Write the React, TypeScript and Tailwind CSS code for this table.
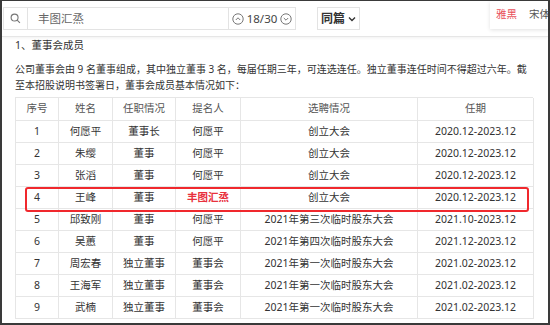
import React from "react";

const rows = [
  ["1", "何愿平", "董事长", "何愿平", "创立大会", "2020.12-2023.12"],
  ["2", "朱缨", "董事", "何愿平", "创立大会", "2020.12-2023.12"],
  ["3", "张滔", "董事", "何愿平", "创立大会", "2020.12-2023.12"],
  ["4", "王峰", "董事", "丰图汇烝", "创立大会", "2020.12-2023.12"],
  ["5", "邱致刚", "董事", "何愿平", "2021年第三次临时股东大会", "2021.10-2023.12"],
  ["6", "吴蕙", "董事", "何愿平", "2021年第四次临时股东大会", "2021.12-2023.12"],
  ["7", "周宏春", "独立董事", "董事会", "2021年第一次临时股东大会", "2021.02-2023.12"],
  ["8", "王海军", "独立董事", "董事会", "2021年第一次临时股东大会", "2021.02-2023.12"],
  ["9", "武楠", "独立董事", "董事会", "2021年第一次临时股东大会", "2021.02-2023.12"],
];

const widths = ["w-[43px]", "w-[54px]", "w-[63px]", "w-[65px]", "w-[177px]", "w-[116px]"];

export default function App() {
  return (
    <div
      className="w-[550px] h-[325px] overflow-hidden bg-white border-2 border-t border-[#3a3a3a] relative text-[#333]"
      style={{ fontFamily: '"Noto Sans", "Noto Sans CJK SC", sans-serif' }}
    >
      {/* toolbar */}
      <div className="h-[36px] flex items-start pt-[6px] border-b border-[#e6e6e6] shadow-[0_1px_3px_rgba(0,0,0,0.06)]">
        <div className="ml-[1px] w-[226px] h-[23px] border border-[#e3e3e3] flex items-center">
          <div className="w-[24px] h-full flex items-center justify-center border-r border-[#e3e3e3]">
            <svg width="11" height="11" viewBox="0 0 12 12" fill="none" stroke="#777" strokeWidth="1.2">
              <circle cx="5" cy="5" r="3.8" />
              <path d="M7.8 7.8L10.8 10.8" />
            </svg>
          </div>
          <span className="pl-[10px] text-[11.5px] text-[#666]">丰图汇烝</span>
        </div>
        <div className="w-[67px] h-[23px] border border-l-0 border-[#e3e3e3] flex items-center justify-center gap-[3px] text-[11.5px] text-[#444]">
          <svg width="12" height="12" viewBox="0 0 12 12" fill="none" stroke="#777" strokeWidth="1">
            <circle cx="6" cy="6" r="5.2" />
            <path d="M3.8 7L6 4.8L8.2 7" />
          </svg>
          <span>18/30</span>
          <svg width="12" height="12" viewBox="0 0 12 12" fill="none" stroke="#777" strokeWidth="1">
            <circle cx="6" cy="6" r="5.2" />
            <path d="M3.8 5L6 7.2L8.2 5" />
          </svg>
        </div>
        <div className="ml-[21px] w-[43px] h-[23px] border border-[#e3e3e3] flex items-center justify-center gap-[3px] text-[12px] font-bold text-[#333]">
          <span>同篇</span>
          <svg width="8" height="6" viewBox="0 0 8 6" fill="none" stroke="#333" strokeWidth="1.4">
            <path d="M1 1.5L4 4.5L7 1.5" />
          </svg>
        </div>
        <div className="ml-auto -mt-[6px] w-[58px] h-[28px] bg-white shadow-[0_1px_4px_rgba(0,0,0,0.12)] flex items-center pl-[6px] gap-[6px] text-[10.5px] whitespace-nowrap">
          <span className="text-[#e8505b]">雅黑</span>
          <span className="w-px h-[10px] bg-[#ddd]" />
          <span className="text-[#555]">宋体</span>
        </div>
      </div>

      <div className="pl-[13px]">
        <div className="text-[10.5px] leading-[16px] text-[#333]">1、董事会成员</div>
        <div className="mt-[8px] text-[10px] leading-[16px] text-[#333] whitespace-nowrap">
          <div>公司董事会由 9 名董事组成，其中独立董事 3 名，每届任期三年，可连选连任。独立董事连任时间不得超过六年。截</div>
          <div>至本招股说明书签署日，董事会成员基本情况如下：</div>
        </div>

        <div className="mt-[4px] w-[518px] border-t border-l border-[#e6e6e6] text-[10.5px]">
          <div className="flex h-[23px] text-[#555]">
            {["序号", "姓名", "任职情况", "提名人", "选聘情况", "任期"].map((h, i) => (
              <div
                key={h}
                className={`${widths[i]} shrink-0 border-r border-b border-[#e6e6e6] flex items-center justify-center`}
              >
                {h}
              </div>
            ))}
          </div>
          {rows.map((r) => (
            <div key={r[0]} className="flex h-[22px]">
              {r.map((c, i) => (
                <div
                  key={i}
                  className={`${widths[i]} shrink-0 border-r border-b border-[#e6e6e6] flex items-center justify-center whitespace-nowrap ${
                    r[0] === "4" && i === 3 ? "text-[#e8313d] font-bold" : "text-[#333]"
                  }`}
                >
                  {c}
                </div>
              ))}
            </div>
          ))}
        </div>
      </div>

      {/* highlight box */}
      <div className="absolute left-[23px] top-[186px] w-[504px] h-[25px] border-2 border-[#f0282d] rounded-[3px]" />
    </div>
  );
}
